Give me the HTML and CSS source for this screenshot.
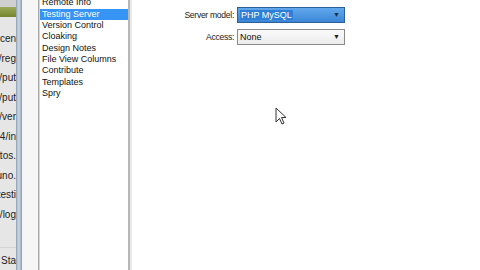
FILE: index.html
```html
<!DOCTYPE html>
<html>
<head>
<meta charset="utf-8">
<link rel="stylesheet" href="styles.css">
</head>
<body>
<div class="screen">
  <div class="files">
    <div class="files-top"></div>
    <div class="files-green"></div>
    <div class="files-rows">
      <div class="frow"><span>Docum cen</span></div>
      <div class="frow"><span>htdocs/reg</span></div>
      <div class="frow"><span>htdocs/put</span></div>
      <div class="frow"><span>htdocs/put</span></div>
      <div class="frow"><span>htdocs/ver</span></div>
      <div class="frow"><span>C:/xampp4/in</span></div>
      <div class="frow"><span>datos.</span></div>
      <div class="frow"><span>uno.</span></div>
      <div class="frow"><span>testi</span></div>
      <div class="frow"><span>htdocs/log</span></div>
    </div>
    <div class="files-bottom"><span>Sta</span></div>
  </div>
  <div class="scroll"></div>
  <div class="gap"></div>
  <div class="category">
    <div class="item cut">Remote Info</div>
    <div class="item sel">Testing Server</div>
    <div class="item">Version Control</div>
    <div class="item">Cloaking</div>
    <div class="item">Design Notes</div>
    <div class="item">File View Columns</div>
    <div class="item">Contribute</div>
    <div class="item">Templates</div>
    <div class="item">Spry</div>
  </div>
  <div class="panel">
    <div class="field">
      <span class="label">Server model:</span>
      <div class="select focus"><span class="val">PHP MySQL</span><span class="arrow">&#9660;</span></div>
    </div>
    <div class="field">
      <span class="label">Access:</span>
      <div class="select"><span class="val">None</span><span class="arrow">&#9660;</span></div>
    </div>
    <svg class="cursor" width="12" height="19" viewBox="0 0 12 19">
      <path d="M1 1 L1 15 L4.5 11.5 L7 17 L9 16 L6.5 10.5 L11 10.5 Z" fill="#fff" stroke="#333" stroke-width="1"/>
    </svg>
  </div>
</div>
</body>
</html>
```
FILE: styles.css
```css
html, body { margin: 0; padding: 0; }
body { width: 480px; height: 270px; overflow: hidden; background: #fff;
  font-family: "Liberation Sans", Arial, sans-serif; }
.screen { display: flex; height: 270px; }
.files { width: 16px; background: #e6e6e6; display: flex; flex-direction: column;
  overflow: hidden; color: #222; }
.files-top { height: 7px; background: #d0d0d0; }
.files-green { height: 10px; background: linear-gradient(#9aa85a, #74862c); }
.files-rows { flex: 1; display: flex; flex-direction: column; padding-top: 16px; }
.frow { height: 19.5px; flex-shrink: 0; line-height: 12px; display: flex; justify-content: flex-end;
  white-space: nowrap; overflow: hidden; font-size: 10px; }
.files-bottom { height: 22px; border-top: 1px solid #d4d4d4; line-height: 26px; font-size: 10px;
  display: flex; justify-content: flex-end; white-space: nowrap; overflow: hidden; }
.scroll { width: 6px; background: linear-gradient(90deg, #8f9fb0, #c9d6e4 40%, #b4c4d4 70%, #8c9aa8); }
.gap { width: 16px; background: #f6f6f6; border-right: 1px solid #a9a9a9; }
.category { width: 88px; background: #fff; border-left: 1px solid #d8d8d8;
  border-right: 2px solid #b8b8b8; box-shadow: 2px 0 0 #e8e8e8; font-size: 9px; color: #111; }
.item { height: 11.4px; line-height: 11.4px; padding-left: 2px; white-space: nowrap; }
.item.cut { height: 8.5px; line-height: 5px; overflow: hidden; }
.item.sel { background: #3594f4; color: #fff; }
.panel { flex: 1; position: relative; padding-top: 6px; }
.field { display: flex; align-items: center; height: 17px; margin-bottom: 5px; }
.label { width: 104px; text-align: right; padding-right: 3px; font-size: 8.6px; letter-spacing: -0.3px; color: #222; }
.select { width: 102px; height: 14px; border: 1px solid #8a8a8a; background: linear-gradient(#fafafa, #ececec);
  display: flex; align-items: center; justify-content: space-between; padding: 0 2px;
  font-size: 9px; color: #111; }
.select.focus { background: linear-gradient(#62a8ec, #3b86d6); border-color: #2d5f98; color: #fff; }
.select.focus .val { background: #2f7fd6; padding: 0 1px; }
.arrow { font-size: 7px; color: #222; padding-right: 2px; }
.select.focus .arrow { color: #15304f; }
.cursor { position: absolute; left: 145px; top: 107px; }
```
